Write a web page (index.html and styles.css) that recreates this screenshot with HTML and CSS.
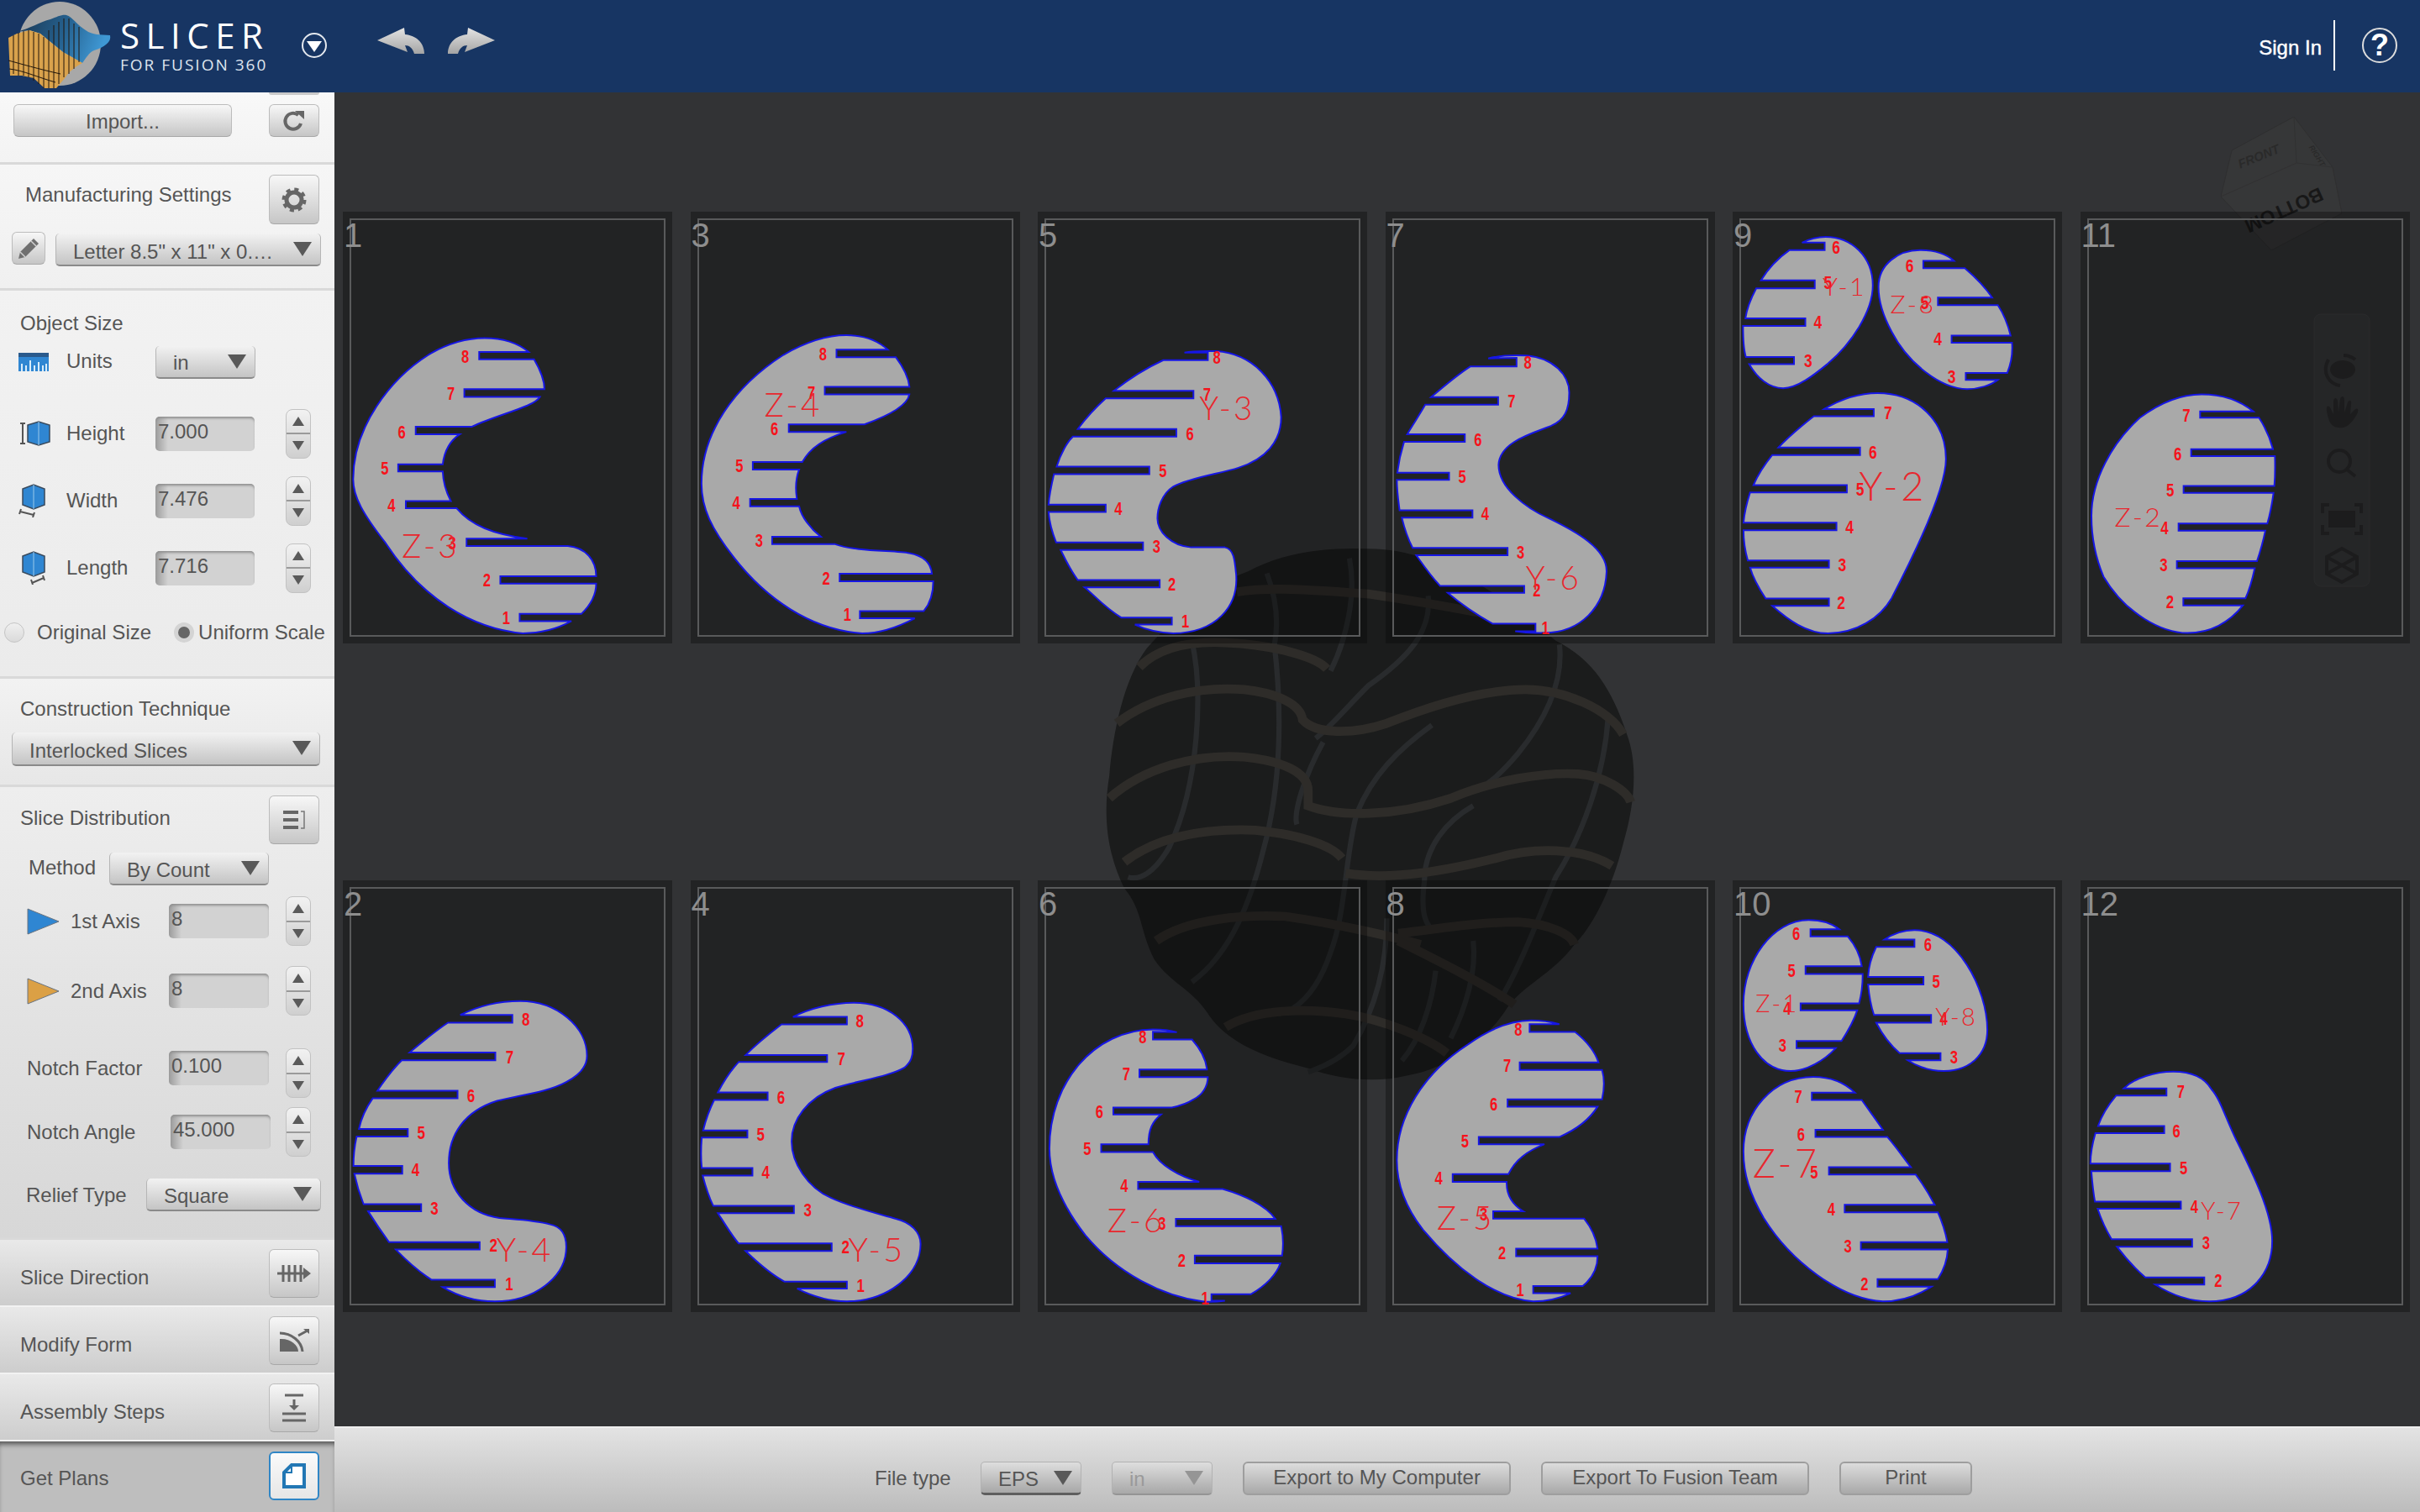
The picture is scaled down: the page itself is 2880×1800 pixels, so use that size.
FILE: index.html
```html
<!DOCTYPE html>
<html lang="en">
<head>
    <meta charset="UTF-8">
    <title>Slicer for Fusion 360</title>
    <link rel="stylesheet" href="styles.css">
</head>
<body>
<div class="app">
    <header class="topbar">
        <svg class="logo" viewBox="0 0 135 110">
            <defs>
                <linearGradient id="wave" x1="0" y1="0" x2="1" y2="0.2">
                    <stop offset="0" stop-color="#1c3650"/>
                    <stop offset="0.55" stop-color="#25618f"/>
                    <stop offset="1" stop-color="#3f98d4"/>
                </linearGradient>
            </defs>
            <ellipse cx="71" cy="52" rx="49" ry="50" fill="#a8a8a8"/>
            <path d="M20 38C35 34 48 26 60 23C68 20 74 17 79 18C86 20 92 30 102 36C110 42 120 41 131 42C133 50 124 56 112 60C106 62 102 70 98 75L75 62L48 40L35 36Z" fill="url(#wave)"/>
            <path d="M10 45L20 40L35 36L48 40L60 50L75 62L98 75C88 80 82 86 78 92L67 105L53 105L40 93L26 90L12 90Z" fill="#d9a24c"/>
            <path d="M16 42V88M22 39V90M28 37V90M34 36V92M40 38V96M46 40V100M52 44V105M58 48V105M64 54V105M70 58V100M76 62V92M82 66V88M88 70V82M58 36V48M64 30V54M70 26V58M76 22V62M82 22V66M88 28V70M94 32V74" fill="none" stroke="#20150a" stroke-width="1"/>
            <path d="M10 72C25 76 45 82 72 88M11 82C28 84 45 92 66 98" fill="none" stroke="#20150a" stroke-width="1"/>
        </svg>
        <div class="brand">
            <div class="brand-name">SLICER</div>
            <div class="brand-sub">FOR FUSION 360</div>
        </div>
        <svg class="menu-toggle" viewBox="0 0 30 30">
            <circle cx="15" cy="15" r="14" fill="none" stroke="#e4e8ee" stroke-width="2"/>
            <path d="M6 10H24L15 23Z" fill="#fff"/>
        </svg>
        <svg class="history-arrow" viewBox="0 0 56 32">
            <defs>
                <linearGradient id="silver" x1="0" y1="0" x2="0" y2="1">
                    <stop offset="0" stop-color="#e4e4e4"/>
                    <stop offset="1" stop-color="#a4a4a4"/>
                </linearGradient>
            </defs>
            <path d="M0 15L32 0L33 8C46 9 56 18 56 31L44 31C42 24 38 21 33 21L36 29Z" fill="url(#silver)"/>
        </svg>
        <svg class="history-arrow redo" viewBox="0 0 56 32">
            <path d="M56 15L24 0L23 8C10 9 0 18 0 31L12 31C14 24 18 21 23 21L20 29Z" fill="url(#silver)"/>
        </svg>
        <div class="user-area">
            <span class="sign-in">Sign In</span>
            <span class="user-divider"></span>
            <span class="help-icon">?</span>
        </div>
    </header>

    <div class="main">
        <aside class="sidebar">
            <section class="panel panel-import">
                <div class="stub"></div>
                <div class="import-row">
                    <div class="btn btn-import">Import...</div>
                    <div class="btn btn-small">
                        <svg class="icon" width="28" height="26" viewBox="0 0 28 26">
                            <path d="M22 16A9.5 9.5 0 1 1 19 6" fill="none" stroke="#666" stroke-width="4"/>
                            <path d="M15 1H26V11Z" fill="#666"/>
                        </svg>
                    </div>
                </div>
            </section>

            <section class="panel panel-mfg">
                <div class="mfg-head">
                    <span class="mfg-title">Manufacturing Settings</span>
                    <div class="btn btn-gear">
                        <svg width="30" height="30" viewBox="0 0 30 30">
                            <circle cx="15" cy="15" r="9" fill="none" stroke="#666" stroke-width="5"/>
                            <circle cx="15" cy="15" r="12.5" fill="none" stroke="#666" stroke-width="4" stroke-dasharray="5 4.8"/>
                        </svg>
                    </div>
                </div>
                <div class="mfg-sheet">
                    <div class="btn btn-pencil">
                        <svg width="30" height="30" viewBox="0 0 30 30">
                            <path d="M21 3L27 9L11 25L3 27L5 19Z" fill="#707070"/>
                            <path d="M18 6L24 12M5 19L11 25" stroke="#cfcfcf" stroke-width="1.5"/>
                        </svg>
                    </div>
                    <div class="select select-sheet">Letter 8.5" x 11" x 0.…</div>
                </div>
            </section>

            <section class="panel panel-size">
                <div class="panel-title">Object Size</div>
                <div class="size-row units-row">
                    <svg width="36" height="22" viewBox="0 0 36 22">
                        <rect width="36" height="22" fill="#2f86d2"/>
                        <rect width="36" height="5" fill="#2a5a8c"/>
                        <path d="M4 22V13M9 22V15M14 22V9M19 22V15M24 22V11M29 22V15M33 22V13" stroke="#d8ecfa" stroke-width="2"/>
                    </svg>
                    <span class="label units-label">Units</span>
                    <div class="select select-units">in</div>
                </div>
                <div class="size-row">
                    <svg width="38" height="30" viewBox="0 0 38 30">
                        <path d="M2 3H8M5 3V27M2 27H8" stroke="#555" stroke-width="2" fill="none"/>
                        <path d="M11 5L24 1L37 5V25L24 29L11 25Z" fill="#2f86d2" stroke="#3a4a5c" stroke-width="1.5"/>
                        <path d="M24 1V29" stroke="#9bc8ea"/>
                    </svg>
                    <span class="label">Height</span>
                    <div class="field">7.000</div>
                    <div class="spin"><span class="spin-up"></span><span class="spin-down"></span></div>
                </div>
                <div class="size-row">
                    <svg width="38" height="40" viewBox="0 0 38 40">
                        <path d="M5 6L18 1L31 6V25L18 30L5 25Z" fill="#2f86d2" stroke="#3a4a5c" stroke-width="1.5"/>
                        <path d="M18 1V30" stroke="#9bc8ea"/>
                        <path d="M2 33L18 37M3 30L1 36M19 34L17 40" stroke="#555" stroke-width="2" fill="none"/>
                    </svg>
                    <span class="label">Width</span>
                    <div class="field">7.476</div>
                    <div class="spin"><span class="spin-up"></span><span class="spin-down"></span></div>
                </div>
                <div class="size-row">
                    <svg width="38" height="40" viewBox="0 0 38 40">
                        <path d="M5 6L18 1L31 6V25L18 30L5 25Z" fill="#2f86d2" stroke="#3a4a5c" stroke-width="1.5"/>
                        <path d="M18 1V30" stroke="#9bc8ea"/>
                        <path d="M16 38L30 32M15 34L17 40M29 29L31 35" stroke="#555" stroke-width="2" fill="none"/>
                    </svg>
                    <span class="label">Length</span>
                    <div class="field">7.716</div>
                    <div class="spin"><span class="spin-up"></span><span class="spin-down"></span></div>
                </div>
                <div class="radio-row">
                    <span class="radio"></span>
                    <span class="radio-label">Original Size</span>
                    <span class="radio radio-on"></span>
                    <span class="radio-label radio-label-tight">Uniform Scale</span>
                </div>
            </section>

            <section class="panel panel-technique">
                <div class="panel-title">Construction Technique</div>
                <div class="select select-technique">Interlocked Slices</div>
            </section>

            <section class="panel panel-slices">
                <div class="slices-head">
                    <span class="slices-title">Slice Distribution</span>
                    <div class="btn btn-tool">
                        <svg width="28" height="26" viewBox="0 0 28 26">
                            <path d="M1 4H19M1 13H19M1 22H19" stroke="#666" stroke-width="4"/>
                            <path d="M22 3H26V23H22" fill="none" stroke="#777" stroke-width="1.5"/>
                        </svg>
                    </div>
                </div>
                <div class="method-row">
                    <span class="method-label">Method</span>
                    <div class="select select-method">By Count</div>
                </div>
                <div class="slice-row first-axis">
                    <svg class="axis-icon" width="38" height="32" viewBox="0 0 38 32">
                        <path d="M1 1L38 16L1 31Z" fill="#2f86d2" stroke="#6a7480"/>
                    </svg>
                    <span class="label">1st Axis</span>
                    <div class="field">8</div>
                    <div class="spin"><span class="spin-up"></span><span class="spin-down"></span></div>
                </div>
                <div class="slice-row second-axis">
                    <svg class="axis-icon" width="38" height="32" viewBox="0 0 38 32">
                        <path d="M1 1L38 16L1 31Z" fill="#dba045" stroke="#6a7480"/>
                    </svg>
                    <span class="label">2nd Axis</span>
                    <div class="field">8</div>
                    <div class="spin"><span class="spin-up"></span><span class="spin-down"></span></div>
                </div>
                <div class="slice-row notch-factor">
                    <span class="label label-wide">Notch Factor</span>
                    <div class="field">0.100</div>
                    <div class="spin"><span class="spin-up"></span><span class="spin-down"></span></div>
                </div>
                <div class="slice-row notch-angle">
                    <span class="label label-wide">Notch Angle</span>
                    <div class="field">45.000</div>
                    <div class="spin"><span class="spin-up"></span><span class="spin-down"></span></div>
                </div>
                <div class="relief-row">
                    <span class="relief-label">Relief Type</span>
                    <div class="select select-relief">Square</div>
                </div>
            </section>

            <section class="accordion">
                <span class="accordion-title">Slice Direction</span>
                <div class="btn btn-tool">
                    <svg width="42" height="26" viewBox="0 0 42 26">
                        <path d="M1 13H34" stroke="#666" stroke-width="3"/>
                        <path d="M8 3V23M15 3V23M22 3V23M29 3V23" stroke="#666" stroke-width="3"/>
                        <path d="M32 6L41 13L32 20Z" fill="#666"/>
                    </svg>
                </div>
            </section>
            <section class="accordion">
                <span class="accordion-title">Modify Form</span>
                <div class="btn btn-tool">
                    <svg width="38" height="30" viewBox="0 0 38 30">
                        <path d="M2 13V28H24C24 20 14 12 2 13Z" fill="#666"/>
                        <path d="M2 6C16 6 28 16 29 28" fill="none" stroke="#666" stroke-width="3"/>
                        <path d="M24 9L35 3" stroke="#666" stroke-width="3"/>
                        <path d="M30 1H37V7Z" fill="#666"/>
                    </svg>
                </div>
            </section>
            <section class="accordion">
                <span class="accordion-title">Assembly Steps</span>
                <div class="btn btn-tool">
                    <svg width="30" height="34" viewBox="0 0 30 34">
                        <path d="M4 2H26M1 24H29M1 32H29" stroke="#666" stroke-width="3"/>
                        <path d="M15 7V15" stroke="#666" stroke-width="3"/>
                        <path d="M9 14H21L15 20Z" fill="#666"/>
                    </svg>
                </div>
            </section>
            <section class="accordion accordion-active">
                <span class="accordion-title">Get Plans</span>
                <div class="btn btn-tool btn-selected">
                    <svg width="30" height="32" viewBox="0 0 30 32">
                        <path d="M3 12L12 3H27V29H3Z" fill="#fff" stroke="#2277b4" stroke-width="4"/>
                        <path d="M12 3V12H3" fill="none" stroke="#2277b4" stroke-width="2"/>
                    </svg>
                </div>
            </section>
        </aside>

        <div class="workspace">
            <div class="canvas">
                <svg class="model" viewBox="0 0 1568 1568">
                    <path class="model-body" d="M460 135C560 80 680 70 800 75C950 80 1120 180 1280 320C1380 370 1430 450 1470 570C1500 650 1490 760 1460 860C1430 980 1380 1080 1330 1130C1270 1210 1190 1240 1150 1300C1100 1380 1000 1460 880 1480C800 1500 700 1490 620 1460C500 1430 400 1390 350 1310C310 1250 250 1230 210 1170C170 1090 180 1040 130 980C90 900 70 800 90 680C100 560 130 420 190 340C280 240 360 170 460 135Z"/>
                    <g class="model-ribs">
                        <path d="M310 320C340 450 330 700 250 870C210 940 170 960 140 950"/>
                        <path d="M530 330C550 500 550 700 500 880C470 1000 420 1150 310 1230"/>
                        <path d="M660 590C610 680 580 780 590 810"/>
                        <path d="M950 545C860 610 790 680 750 780C720 880 720 1050 680 1150C650 1240 610 1280 580 1300"/>
                        <path d="M1060 760C990 800 930 870 930 960C920 1040 930 1070 950 1090"/>
                        <path d="M1290 330C1300 420 1260 520 1180 620C1130 680 1100 700 1070 720"/>
                        <path d="M1420 520C1410 680 1350 840 1280 950C1230 1070 1180 1200 1130 1280"/>
                        <path d="M940 200C950 300 880 370 780 440C720 500 680 550 640 580"/>
                        <path d="M1060 1120C1070 1200 1040 1300 1000 1380"/>
                        <path d="M960 1200C950 1290 920 1380 870 1440"/>
                        <path d="M830 1060C830 1180 800 1300 740 1400C700 1440 650 1460 620 1470"/>
                        <path d="M730 100C750 200 720 320 680 400"/>
                        <path d="M510 140C540 220 540 280 530 330"/>
                    </g>
                    <g class="model-bands">
                        <path d="M110 540C200 470 330 440 450 450C540 460 600 490 605 530C640 570 740 570 830 540C930 500 1080 450 1200 450C1300 450 1420 500 1460 570"/>
                        <path d="M90 740C180 660 320 620 450 630C550 640 620 670 620 720L620 760C700 790 850 790 1000 740C1120 690 1250 670 1340 675C1410 680 1470 720 1480 750"/>
                        <path d="M130 910C220 840 350 820 480 825C580 835 680 860 710 900"/>
                        <path d="M720 940C850 960 1000 930 1120 900C1220 870 1350 870 1430 920"/>
                        <path d="M215 1120C300 1060 450 1050 560 1055C700 1075 850 1110 920 1130"/>
                        <path d="M860 1100C960 1090 1060 1070 1180 1070C1260 1075 1320 1100 1330 1130"/>
                        <path d="M860 1120C960 1170 1100 1240 1170 1290"/>
                        <path d="M400 1350C480 1300 620 1300 720 1315C820 1330 940 1380 990 1420"/>
                        <path d="M170 390C220 340 300 320 400 325C520 330 640 360 670 395"/>
                        <path d="M430 190C520 175 640 185 780 195C880 210 1000 230 1100 250"/>
                    </g>
                </svg>

                <svg class="view-cube" viewBox="0 0 144 159">
                    <path d="M0 95L13 40L87 0L133 60L144 115L60 159Z" fill="#363738" stroke="#2f2f30"/>
                    <path d="M0 95L90 55L133 60M90 55L87 0" fill="none" stroke="#313132"/>
                    <text class="cube-front" x="47" y="52" transform="rotate(-22 47 52)">FRONT</text>
                    <text class="cube-right" x="112" y="48" transform="rotate(58 112 48)">RIGHT</text>
                    <text class="cube-bottom" x="72" y="104" transform="rotate(156 72 104)">BOTTOM</text>
                </svg>

                <svg class="nav-bar" viewBox="0 0 68 326">
                    <rect class="nav-back" x="1" y="1" width="66" height="324" rx="8"/>
                    <g class="nav-lines">
                        <ellipse class="nav-solid" cx="35" cy="67" rx="13" ry="9"/>
                        <path d="M18 55C10 70 18 84 32 86M50 55C46 52 42 50 36 50"/>
                        <circle cx="31" cy="176" r="13"/>
                        <path d="M40 186L50 194"/>
                        <path d="M19 228H11V238M49 228H57V238M19 262H11V252M49 262H57V252"/>
                        <path d="M34 280L52 290V310L34 320L16 310V290Z"/>
                        <path d="M16 290L52 310M52 290L16 310"/>
                    </g>
                    <path class="nav-solid" d="M18 125C14 112 16 108 20 112L24 120L24 104C25 100 28 100 29 104L30 118L32 102C33 98 37 98 37 103L37 118L41 106C43 102 46 104 45 108L44 120L50 114C54 112 54 116 52 120C46 130 40 138 30 136C24 136 20 132 18 125Z"/>
                    <rect class="nav-solid" x="18" y="235" width="32" height="20"/>
                </svg>

                <div class="sheets">
                    <article class="sheet">
                        <div class="sheet-frame"></div>
                        <span class="sheet-number">1</span>
                        <svg class="sheet-art" viewBox="15 35 732 1492" preserveAspectRatio="none">
                            <path class="piece" d="M428 520L318 520L318 545L440 545C455 585 463 615 463 648L285 648L285 675L453 675C440 710 360 735 302 778L177 778L177 804L275 804C250 830 240 870 237 908L138 908L138 933L237 933C238 975 245 1005 255 1035L155 1035L155 1060L268 1060C300 1120 350 1150 425 1165L290 1165L290 1190L515 1190C555 1195 578 1240 578 1295L365 1295L365 1320L578 1320C578 1360 565 1395 545 1425L408 1425L408 1450L523 1450C490 1478 450 1492 415 1492C300 1475 190 1370 110 1180C60 1080 38 1020 38 960C38 780 120 610 210 525C250 490 290 472 330 472C370 472 405 490 428 520Z"/>
                            <text class="num" x="287" y="533">8</text>
                            <text class="num" x="255" y="662">7</text>
                            <text class="num" x="146" y="795">6</text>
                            <text class="num" x="108" y="920">5</text>
                            <text class="num" x="123" y="1047">4</text>
                            <text class="num" x="258" y="1178">3</text>
                            <text class="num" x="335" y="1307">2</text>
                            <text class="num" x="378" y="1437">1</text>
                            <text class="tag" x="210" y="1230">Z-3</text>
                        </svg>
                    </article>
                    <article class="sheet">
                        <div class="sheet-frame"></div>
                        <span class="sheet-number">2</span>
                        <svg class="sheet-art" viewBox="15 23 715 1492" preserveAspectRatio="none">
                            <path class="piece" d="M270 488L383 488L383 515L243 515C210 550 185 585 160 618L346 618L346 645L143 645C120 680 105 715 90 750L264 750L264 776L80 776C65 810 55 845 50 882L156 882L156 908L45 908C40 945 38 975 38 1010L144 1010L144 1037L40 1037C45 1075 52 1110 60 1142L185 1142L185 1167L70 1167C85 1205 100 1240 115 1273L312 1273L312 1299L130 1299C155 1340 180 1375 207 1403L345 1403L345 1429L232 1429C265 1460 305 1478 345 1478C430 1478 500 1395 500 1290C500 1250 490 1220 465 1212C430 1197 390 1195 355 1190C290 1175 245 1100 245 1000C245 900 280 820 350 785C400 765 460 755 500 720C530 695 545 665 545 630C545 530 480 440 400 440C350 440 305 460 270 488Z"/>
                            <text class="num" x="412" y="503">8</text>
                            <text class="num" x="377" y="632">7</text>
                            <text class="num" x="293" y="767">6</text>
                            <text class="num" x="185" y="895">5</text>
                            <text class="num" x="172" y="1023">4</text>
                            <text class="num" x="214" y="1155">3</text>
                            <text class="num" x="342" y="1283">2</text>
                            <text class="num" x="376" y="1416">1</text>
                            <text class="tag" x="410" y="1340">Y-4</text>
                        </svg>
                    </article>
                    <article class="sheet">
                        <div class="sheet-frame"></div>
                        <span class="sheet-number">3</span>
                        <svg class="sheet-art" viewBox="784 35 732 1492" preserveAspectRatio="none">
                            <path class="piece" d="M1222 512L1108 512L1108 538L1240 538C1258 575 1268 610 1270 640L1082 640L1082 666L1270 666C1265 710 1215 745 1170 770L1002 770L1002 796L1130 796C1080 820 1050 850 1032 900L922 900L922 926L1025 926C1018 955 1016 990 1020 1028L916 1028L916 1053L1025 1053C1030 1090 1050 1130 1073 1158L965 1158L965 1184L1105 1184C1150 1210 1240 1205 1270 1215C1305 1225 1318 1255 1320 1286L1115 1286L1115 1312L1323 1312C1323 1350 1318 1385 1302 1415L1160 1415L1160 1440L1282 1440C1245 1470 1205 1492 1165 1492C1050 1480 950 1370 880 1230C830 1130 808 1060 808 975C808 800 880 640 990 530C1040 485 1085 462 1130 462C1170 462 1200 480 1222 512Z"/>
                            <text class="num" x="1078" y="525">8</text>
                            <text class="num" x="1052" y="660">7</text>
                            <text class="num" x="970" y="785">6</text>
                            <text class="num" x="892" y="912">5</text>
                            <text class="num" x="885" y="1040">4</text>
                            <text class="num" x="936" y="1170">3</text>
                            <text class="num" x="1085" y="1300">2</text>
                            <text class="num" x="1132" y="1425">1</text>
                            <text class="tag" x="1012" y="742">Z-4</text>
                        </svg>
                    </article>
                    <article class="sheet">
                        <div class="sheet-frame"></div>
                        <span class="sheet-number">4</span>
                        <svg class="sheet-art" viewBox="766 23 715 1492" preserveAspectRatio="none">
                            <path class="piece" d="M988 495L1105 495L1105 521L963 521C935 555 905 595 885 627L1062 627L1062 651L870 651C850 685 835 725 825 756L933 756L933 782L817 782C805 820 798 855 793 887L889 887L889 912L790 912C788 950 788 985 790 1017L900 1017L900 1043L792 1043C798 1080 805 1115 815 1148L990 1148L990 1173L825 1173C840 1210 855 1250 870 1278L1072 1278L1072 1304L885 1304C915 1350 940 1385 970 1410L1105 1410L1105 1434L997 1434C1030 1460 1065 1478 1105 1478C1190 1478 1265 1390 1265 1280C1265 1240 1245 1205 1210 1192C1160 1170 1110 1150 1070 1120C1020 1085 985 1000 985 925C985 850 1020 775 1080 740C1130 715 1200 700 1230 670C1245 650 1248 630 1248 605C1248 515 1195 446 1120 446C1075 446 1025 465 988 495Z"/>
                            <text class="num" x="1133" y="508">8</text>
                            <text class="num" x="1093" y="638">7</text>
                            <text class="num" x="962" y="772">6</text>
                            <text class="num" x="918" y="900">5</text>
                            <text class="num" x="928" y="1030">4</text>
                            <text class="num" x="1020" y="1160">3</text>
                            <text class="num" x="1102" y="1290">2</text>
                            <text class="num" x="1135" y="1422">1</text>
                            <text class="tag" x="1170" y="1340">Y-5</text>
                        </svg>
                    </article>
                    <article class="sheet">
                        <div class="sheet-frame"></div>
                        <span class="sheet-number">5</span>
                        <svg class="sheet-art" viewBox="24 35 732 1492" preserveAspectRatio="none">
                            <path class="piece" d="M420 517C500 525 560 620 565 745C565 830 530 890 470 920C430 940 360 955 325 985C300 1010 290 1060 290 1095C290 1140 320 1190 365 1195L440 1195C460 1200 462 1240 465 1290C470 1400 420 1490 325 1492C295 1490 265 1480 240 1462L322 1462L322 1438L210 1438C170 1400 150 1360 128 1333L295 1333L295 1308L113 1308C95 1270 85 1235 75 1204L258 1204L258 1178L65 1178C55 1140 50 1110 48 1073L175 1073L175 1047L48 1047C50 1010 55 975 60 942L272 942L272 916L66 916C75 870 90 830 102 812L332 812L332 786L113 786C130 750 150 715 175 680L370 680L370 654L193 654C225 615 265 575 303 548L402 548L402 522L350 522C365 517 385 516 420 517Z"/>
                            <text class="num" x="422" y="537">8</text>
                            <text class="num" x="400" y="665">7</text>
                            <text class="num" x="362" y="800">6</text>
                            <text class="num" x="302" y="930">5</text>
                            <text class="num" x="203" y="1060">4</text>
                            <text class="num" x="288" y="1190">3</text>
                            <text class="num" x="322" y="1322">2</text>
                            <text class="num" x="352" y="1450">1</text>
                            <text class="tag" x="445" y="755">Y-3</text>
                        </svg>
                    </article>
                    <article class="sheet">
                        <div class="sheet-frame"></div>
                        <span class="sheet-number">6</span>
                        <svg class="sheet-art" viewBox="24 23 732 1492" preserveAspectRatio="none">
                            <path class="piece" d="M333 548L280 546L280 573L367 573C385 605 398 640 400 677L250 677L250 703L402 703C402 735 390 765 370 780C355 795 340 802 322 808L192 808L192 832L298 832C280 855 270 880 270 935L165 935L165 962L280 962C295 1005 335 1045 383 1065L247 1065L247 1090L435 1090C480 1110 530 1145 552 1193L331 1193L331 1218L565 1218C570 1255 570 1290 567 1320L373 1320L373 1347L563 1347C555 1385 530 1425 498 1453L410 1453L410 1476L440 1476C420 1480 400 1480 390 1478C300 1460 200 1380 130 1250C80 1150 50 1050 50 950C50 720 150 540 280 538C300 538 320 542 333 548Z"/>
                            <text class="num" x="257" y="563">8</text>
                            <text class="num" x="221" y="690">7</text>
                            <text class="num" x="161" y="822">6</text>
                            <text class="num" x="134" y="948">5</text>
                            <text class="num" x="216" y="1078">4</text>
                            <text class="num" x="300" y="1208">3</text>
                            <text class="num" x="344" y="1335">2</text>
                            <text class="num" x="396" y="1465">1</text>
                            <text class="tag" x="243" y="1240">Z-6</text>
                        </svg>
                    </article>
                    <article class="sheet">
                        <div class="sheet-frame"></div>
                        <span class="sheet-number">7</span>
                        <svg class="sheet-art" viewBox="797 35 732 1492" preserveAspectRatio="none">
                            <path class="piece" d="M1110 532C1170 540 1205 600 1205 660C1205 720 1195 755 1165 775C1125 800 1050 830 1048 910C1048 990 1110 1060 1160 1095C1220 1140 1290 1200 1288 1280C1285 1400 1230 1490 1150 1490C1130 1492 1105 1490 1085 1485L1130 1485L1130 1459L1035 1459C990 1420 960 1385 935 1352L1105 1352L1105 1328L918 1328C895 1290 880 1255 865 1222L1068 1222L1068 1197L857 1197C845 1160 838 1125 833 1092L990 1092L990 1067L828 1067C825 1030 822 1000 822 962L938 962L938 937L823 937C826 900 832 860 838 830L973 830L973 804L845 804C860 765 875 730 885 702L1047 702L1047 676L898 676C925 640 955 600 985 570L1088 570L1088 540L1025 542C1050 532 1085 530 1110 532Z"/>
                            <text class="num" x="1113" y="555">8</text>
                            <text class="num" x="1077" y="687">7</text>
                            <text class="num" x="1002" y="822">6</text>
                            <text class="num" x="967" y="950">5</text>
                            <text class="num" x="1018" y="1078">4</text>
                            <text class="num" x="1097" y="1210">3</text>
                            <text class="num" x="1133" y="1342">2</text>
                            <text class="num" x="1152" y="1472">1</text>
                            <text class="tag" x="1170" y="1340">Y-6</text>
                        </svg>
                    </article>
                    <article class="sheet">
                        <div class="sheet-frame"></div>
                        <span class="sheet-number">8</span>
                        <svg class="sheet-art" viewBox="797 23 732 1492" preserveAspectRatio="none">
                            <path class="piece" d="M1183 520L1117 520L1117 547L1218 547C1245 580 1262 615 1270 652L1095 652L1095 678L1278 678C1285 715 1283 745 1278 780L1068 780L1068 805L1268 805C1250 850 1220 885 1183 910L1004 910L1004 935L1150 935C1110 960 1085 990 1070 1038L946 1038L946 1065L1066 1065C1065 1110 1080 1145 1103 1167L1036 1167L1036 1192L1238 1192C1255 1225 1265 1260 1268 1296L1087 1296L1087 1322L1268 1322C1268 1365 1255 1400 1235 1425L1125 1425L1125 1450L1208 1450C1180 1470 1150 1478 1125 1478C1040 1470 950 1360 880 1230C840 1150 822 1070 822 990C822 840 880 690 980 590C1030 535 1080 507 1120 507C1145 507 1165 512 1183 520Z"/>
                            <text class="num" x="1092" y="537">8</text>
                            <text class="num" x="1067" y="663">7</text>
                            <text class="num" x="1037" y="795">6</text>
                            <text class="num" x="973" y="922">5</text>
                            <text class="num" x="915" y="1050">4</text>
                            <text class="num" x="1015" y="1175">3</text>
                            <text class="num" x="1056" y="1310">2</text>
                            <text class="num" x="1096" y="1437">1</text>
                            <text class="tag" x="975" y="1232">Z-5</text>
                        </svg>
                    </article>
                    <article class="sheet">
                        <div class="sheet-frame"></div>
                        <span class="sheet-number">9</span>
                        <svg class="sheet-art" viewBox="788 35 698 1492" preserveAspectRatio="none">
                            <path class="piece" d="M935 142L983 142L983 168L908 168C880 200 860 240 848 272L962 272L962 300L838 300C825 340 818 370 815 404L942 404L942 430L810 430C810 470 810 505 816 537L918 537L918 562L823 562C840 610 865 645 895 645C925 645 960 600 990 560C1040 490 1085 380 1085 290C1085 190 1040 122 985 122C968 122 950 130 935 142Z"/>
                            <path class="piece" d="M1257 205L1192 205L1192 230L1280 230C1305 265 1325 300 1338 332L1223 332L1223 358L1350 358C1365 395 1372 430 1377 463L1252 463L1252 488L1380 488C1382 530 1378 560 1370 592L1282 592L1282 616L1350 616C1335 635 1310 648 1285 648C1230 648 1160 560 1125 450C1105 390 1097 340 1097 295C1097 215 1140 168 1185 168C1215 168 1240 180 1257 205Z"/>
                            <path class="piece" d="M982 717L1087 717L1087 742L960 742C930 780 905 815 885 850L1058 850L1058 876L872 876C855 910 840 950 832 980L1030 980L1030 1005L825 1005C818 1040 813 1075 811 1110L1008 1110L1008 1136L811 1136C811 1170 814 1205 820 1240L992 1240L992 1265L825 1265C832 1305 845 1340 858 1372L992 1372L992 1397L872 1397C905 1445 945 1492 990 1492C1050 1492 1100 1440 1125 1370C1160 1260 1240 1000 1240 890C1240 760 1180 662 1095 662C1050 662 1010 690 982 717Z"/>
                            <text class="num" x="1007" y="158">6</text>
                            <text class="num" x="990" y="280">5</text>
                            <text class="num" x="968" y="417">4</text>
                            <text class="num" x="948" y="548">3</text>
                            <text class="tag tag-s" x="1025" y="325">Y-1</text>
                            <text class="num" x="1163" y="220">6</text>
                            <text class="num" x="1195" y="350">5</text>
                            <text class="num" x="1222" y="475">4</text>
                            <text class="num" x="1252" y="605">3</text>
                            <text class="tag tag-s" x="1170" y="385">Z-8</text>
                            <text class="num" x="1117" y="730">7</text>
                            <text class="num" x="1085" y="865">6</text>
                            <text class="num" x="1058" y="993">5</text>
                            <text class="num" x="1035" y="1125">4</text>
                            <text class="num" x="1020" y="1255">3</text>
                            <text class="num" x="1018" y="1385">2</text>
                            <text class="tag tag-l" x="1128" y="1035">Y-2</text>
                        </svg>
                    </article>
                    <article class="sheet">
                        <div class="sheet-frame"></div>
                        <span class="sheet-number">10</span>
                        <svg class="sheet-art" viewBox="41 23 732 1492" preserveAspectRatio="none">
                            <path class="piece" d="M278 192L214 192L214 217L297 217C315 250 325 285 328 320L203 320L203 347L330 347C330 385 327 420 322 448L192 448L192 472L318 472C310 510 297 545 283 578L183 578L183 603L270 603C245 645 205 682 170 682C110 682 65 590 65 450C65 300 130 160 210 160C240 160 262 172 278 192Z"/>
                            <path class="piece" d="M378 228L445 228L445 253L360 253C350 285 343 320 342 357L465 357L465 383L342 383C344 420 348 455 355 488L482 488L482 515L360 515C375 560 393 595 412 620L503 620L503 645L430 645C455 670 485 682 510 682C565 682 607 630 607 540C607 400 540 195 445 195C420 195 395 210 378 228Z"/>
                            <path class="piece" d="M313 757L217 757L217 782L328 782C345 820 362 855 375 885L225 885L225 910L385 910C405 945 422 985 437 1014L255 1014L255 1040L448 1040C465 1075 480 1115 490 1144L290 1144L290 1170L497 1170C507 1205 514 1240 518 1273L326 1273L326 1299L519 1299C518 1335 510 1370 497 1401L363 1401L363 1427L483 1427C450 1460 415 1478 375 1478C280 1470 170 1340 110 1190C80 1110 65 1040 65 960C65 820 130 702 220 702C260 702 292 725 313 757Z"/>
                            <text class="num" x="182" y="207">6</text>
                            <text class="num" x="172" y="333">5</text>
                            <text class="num" x="162" y="465">4</text>
                            <text class="num" x="152" y="592">3</text>
                            <text class="tag tag-s" x="140" y="480">Z-1</text>
                            <text class="num" x="475" y="243">6</text>
                            <text class="num" x="493" y="372">5</text>
                            <text class="num" x="510" y="500">4</text>
                            <text class="num" x="533" y="632">3</text>
                            <text class="tag tag-s" x="538" y="525">Y-8</text>
                            <text class="num" x="187" y="770">7</text>
                            <text class="num" x="193" y="900">6</text>
                            <text class="num" x="222" y="1030">5</text>
                            <text class="num" x="260" y="1158">4</text>
                            <text class="num" x="297" y="1285">3</text>
                            <text class="num" x="334" y="1415">2</text>
                            <text class="tag tag-l" x="160" y="1050">Z-7</text>
                        </svg>
                    </article>
                    <article class="sheet sheet-eleven">
                        <div class="sheet-frame"></div>
                        <span class="sheet-number">11</span>
                        <svg class="sheet-art" viewBox="108 507 1176 1033" preserveAspectRatio="none">
                            <path class="piece" d="M725 985L535 985L535 1000L745 1000C770 1025 785 1050 795 1075L503 1075L503 1092L802 1092C803 1115 803 1140 800 1163L476 1163L476 1180L797 1180C792 1205 785 1230 775 1253L458 1253L458 1270L768 1270C760 1295 750 1320 738 1343L452 1343L452 1360L730 1360C722 1385 712 1410 697 1432L475 1432L475 1449L688 1449C640 1490 570 1515 490 1515C400 1515 270 1470 190 1380C165 1340 147 1290 147 1235C147 1150 220 1060 320 1000C400 960 470 944 540 944C620 944 680 960 725 985Z"/>
                            <text class="num" x="486" y="993">7</text>
                            <text class="num" x="455" y="1085">6</text>
                            <text class="num" x="428" y="1172">5</text>
                            <text class="num" x="408" y="1262">4</text>
                            <text class="num" x="405" y="1352">3</text>
                            <text class="num" x="427" y="1440">2</text>
                            <text class="tag" x="315" y="1260">Z-2</text>
                        </svg>
                    </article>
                    <article class="sheet">
                        <div class="sheet-frame"></div>
                        <span class="sheet-number">12</span>
                        <svg class="sheet-art" viewBox="814 23 732 1492" preserveAspectRatio="none">
                            <path class="piece" d="M910 742L1005 742L1005 767L893 767C875 800 860 840 853 872L1000 872L1000 897L847 897C840 935 836 970 836 1002L1013 1002L1013 1028L838 1028C840 1065 842 1100 846 1133L1037 1133L1037 1158L852 1158C860 1195 870 1230 883 1263L1062 1263L1062 1289L895 1289C915 1330 935 1365 958 1395L1089 1395L1089 1420L980 1420C1015 1455 1055 1478 1100 1478C1185 1478 1240 1390 1240 1270C1240 1170 1195 1030 1160 920C1135 840 1125 780 1105 745C1090 705 1060 684 1020 684C980 684 935 705 910 742Z"/>
                            <text class="num" x="1037" y="752">7</text>
                            <text class="num" x="1027" y="888">6</text>
                            <text class="num" x="1043" y="1015">5</text>
                            <text class="num" x="1067" y="1148">4</text>
                            <text class="num" x="1093" y="1275">3</text>
                            <text class="num" x="1120" y="1405">2</text>
                            <text class="tag tag-s" x="1128" y="1195">Y-7</text>
                        </svg>
                    </article>
                </div>
            </div>

            <footer class="export-bar">
                <span class="export-label">File type</span>
                <div class="select export-select select-strong">EPS</div>
                <div class="select export-select select-off">in</div>
                <div class="btn export-btn">Export to My Computer</div>
                <div class="btn export-btn">Export To Fusion Team</div>
                <div class="btn export-btn export-print">Print</div>
            </footer>
        </div>
    </div>
</div>
</body>
</html>
```

FILE: styles.css
```css
* {
    box-sizing: border-box;
}

body {
    margin: 0;
    font-family: "Liberation Sans", Arial, sans-serif;
    font-size: 24px;
    color: #555;
    background-color: #323335;
}

.app {
    width: 2880px;
    height: 1800px;
    overflow: hidden;
}

/* top bar */
.topbar {
    height: 110px;
    display: flex;
    align-items: flex-start;
    background-color: #173563;
}

.logo {
    width: 135px;
    height: 110px;
    flex: none;
}

.brand {
    margin-left: 8px;
    width: 176px;
    padding-top: 24px;
    font-family: "Open Sans", sans-serif;
    color: #fff;
    white-space: nowrap;
}

.brand-name {
    font-size: 42px;
    font-weight: 500;
    line-height: 36px;
    letter-spacing: 7.5px;
}

.brand-sub {
    margin-top: 7px;
    font-size: 19px;
    line-height: 20px;
    letter-spacing: 2px;
    color: #dfe5ee;
}

.menu-toggle {
    width: 30px;
    height: 30px;
    margin: 39px 0 0 40px;
}

.history-arrow {
    width: 56px;
    height: 32px;
    margin: 33px 0 0 60px;
}

.history-arrow.redo {
    margin-left: 28px;
}

.user-area {
    margin-left: auto;
    padding: 24px 27px 0 0;
    display: flex;
    align-items: center;
    height: 84px;
    color: #fff;
}

.sign-in {
    margin-top: 6px;
    -webkit-text-stroke: 0.4px #fff;
}

.user-divider {
    width: 2px;
    height: 60px;
    margin-left: 14px;
    background-color: #fff;
}

.help-icon {
    width: 42px;
    height: 42px;
    margin-left: 32px;
    border: 2px solid #dcdcdc;
    border-radius: 50%;
    font-size: 36px;
    font-weight: bold;
    line-height: 38px;
    text-align: center;
}

.main {
    display: flex;
    height: 1690px;
}

/* left column */
.sidebar {
    width: 398px;
    flex: none;
    background-color: #eee;
}

.panel {
    border-bottom: 3px solid #d9d9d9;
}

.panel-title {
    line-height: 28px;
    padding-left: 24px;
}

.btn {
    display: flex;
    align-items: center;
    justify-content: center;
    border: 1px solid #bcbcbc;
    border-bottom-color: #a8a8a8;
    border-radius: 6px;
    background: linear-gradient(#f7f7f7, #c6c6c6);
    white-space: nowrap;
}

.select {
    position: relative;
    display: flex;
    align-items: center;
    height: 39px;
    padding-left: 20px;
    padding-top: 4px;
    border-radius: 5px;
    border-bottom: 2px solid #8a8a8a;
    border-right: 1px solid #b5b5b5;
    border-left: 1px solid #b5b5b5;
    background: linear-gradient(#f2f2f2, #c4c4c4);
    white-space: nowrap;
}

.select::after {
    content: "";
    position: absolute;
    right: 10px;
    top: 10px;
    border-left: 11px solid transparent;
    border-right: 11px solid transparent;
    border-top: 17px solid #595959;
}

.field {
    height: 41px;
    padding-left: 3px;
    line-height: 36px;
    border-radius: 5px;
    background: linear-gradient(90deg, #9c9c9c, #d2d2d2 15px);
    box-shadow: inset 0 3px 3px -1px #8f8f8f;
}

.spin {
    width: 30px;
    height: 59px;
    justify-self: end;
    display: flex;
    flex-direction: column;
    border: 1px solid #c2c2c2;
    border-radius: 8px;
    background: linear-gradient(#f2f2f2, #cfcfcf);
}

.spin-up,
.spin-down {
    flex: 1;
    display: flex;
    align-items: center;
    justify-content: center;
}

.spin-up {
    border-bottom: 2px solid #9a9a9a;
}

.spin-up::after {
    content: "";
    border-left: 7px solid transparent;
    border-right: 7px solid transparent;
    border-bottom: 11px solid #5a5a5a;
}

.spin-down::after {
    content: "";
    border-left: 7px solid transparent;
    border-right: 7px solid transparent;
    border-top: 11px solid #5a5a5a;
}

/* import */
.panel-import {
    height: 86px;
    background: linear-gradient(#f8f8f8, #f3f3f3);
}

.stub {
    width: 60px;
    height: 3px;
    margin-left: 320px;
    background-color: #c9c9c9;
    border-radius: 0 0 4px 4px;
}

.import-row {
    display: flex;
    justify-content: space-between;
    margin-top: 11px;
    padding: 0 18px 0 16px;
}

.btn-import {
    width: 260px;
    height: 39px;
    padding-top: 2px;
}

.btn-small {
    width: 60px;
    height: 39px;
}

/* manufacturing */
.panel-mfg {
    height: 150px;
    padding-top: 12px;
    background: linear-gradient(#f6f6f6, #f0f0f0);
}

.mfg-head {
    display: flex;
    justify-content: space-between;
    padding: 0 18px 0 30px;
}

.mfg-title {
    margin-top: 10px;
    line-height: 28px;
}

.btn-gear {
    width: 60px;
    height: 59px;
}

.mfg-sheet {
    display: flex;
    align-items: flex-start;
    margin-top: 9px;
    padding-left: 14px;
}

.btn-pencil {
    width: 40px;
    height: 39px;
}

.select-sheet {
    width: 316px;
    margin: 2px 0 0 12px;
    padding-top: 6px;
}

/* object size */
.panel-size {
    height: 462px;
    padding-top: 25px;
    background: linear-gradient(#f2f2f2, #ebebeb);
}

.size-row {
    display: grid;
    grid-template-columns: 57px 106px 118px 67px;
    align-items: center;
    height: 80px;
    padding-left: 22px;
}

.units-row {
    height: 40px;
    margin: 12px 0 25px;
}

.units-label {
    margin-top: -3px;
}

.select-units {
    width: 119px;
}

.radio-row {
    display: flex;
    align-items: center;
    height: 40px;
    margin-top: 17px;
    padding-left: 5px;
}

.radio {
    width: 24px;
    height: 24px;
    flex: none;
    border-radius: 50%;
    border: 1px solid #c4c4c4;
    background: linear-gradient(#f0f0f0, #dadada);
}

.radio-on {
    margin-left: 27px;
    border-width: 5px;
    border-color: #d4d4d4;
    background: #666;
}

.radio-label {
    margin-left: 15px;
    white-space: nowrap;
}

.radio-label-tight {
    margin-left: 5px;
}

/* construction */
.panel-technique {
    height: 129px;
    padding-top: 22px;
    background: linear-gradient(#f2f2f2, #e7e7e7);
}

.select-technique {
    width: 367px;
    height: 40px;
    margin: 14px 0 0 14px;
    padding-top: 6px;
}

/* slices */
.panel-slices {
    height: 539px;
    padding-top: 10px;
    background: linear-gradient(#eeeeee, #d7d7d7);
}

.slices-head {
    display: flex;
    justify-content: space-between;
    padding: 0 18px 0 24px;
}

.slices-title {
    margin-top: 13px;
    line-height: 28px;
}

.btn-tool {
    width: 60px;
    height: 58px;
    flex: none;
}

.method-row {
    display: flex;
    align-items: center;
    height: 39px;
    margin-top: 10px;
    padding-left: 34px;
}

.method-label {
    width: 96px;
    margin-top: -3px;
}

.select-method {
    width: 190px;
}

.slice-row {
    display: grid;
    grid-template-columns: 52px 117px 119px 50px;
    align-items: center;
    height: 59px;
    padding-left: 32px;
}

.label {
    white-space: nowrap;
}

.label-wide {
    grid-column: 1 / 3;
}

.first-axis {
    margin-top: 13px;
}

.second-axis {
    margin-top: 24px;
}

.notch-factor {
    margin-top: 27px;
}

.notch-factor .spin {
    margin-top: 12px;
}

.notch-angle {
    margin-top: 23px;
    grid-template-columns: 52px 117px 119px 48px;
    padding-left: 34px;
}

.notch-angle .label {
    margin-left: -2px;
}

.relief-row {
    display: flex;
    align-items: center;
    margin-top: 26px;
    padding-left: 31px;
}

.relief-label {
    width: 143px;
}

.select-relief {
    width: 208px;
}

/* collapsed steps */
.accordion {
    display: flex;
    justify-content: space-between;
    align-items: flex-start;
    height: 80px;
    padding: 11px 18px 0 24px;
    border-bottom: 2px solid #f2f2f2;
    background: linear-gradient(#e9e9e9, #cdcdcd);
}

.accordion-title {
    margin-top: 20px;
    line-height: 28px;
}

.accordion-active {
    height: 84px;
    padding-top: 12px;
    border-bottom: 0;
    background: #bebebe;
    box-shadow: inset 0 6px 6px -3px #4e4e4e;
}

.accordion-active .accordion-title {
    margin-top: 18px;
}

.btn-selected {
    border: 2px solid #2f86c6;
    background: linear-gradient(#fafafa, #e6e6e6);
}

/* workspace */
.workspace {
    flex: 1;
    display: flex;
    flex-direction: column;
}

.canvas {
    position: relative;
    flex: 1;
    overflow: hidden;
    background-color: #323335;
}

.model {
    position: absolute;
    left: 882px;
    top: 510px;
    width: 700px;
    height: 700px;
}

.model-body {
    fill: #1b1c1c;
}

.model-ribs path {
    fill: none;
    stroke: #292b2d;
    stroke-width: 14;
}

.model-bands path {
    fill: none;
    stroke: #2e2c29;
    stroke-width: 24;
}

.view-cube {
    position: absolute;
    left: 2245px;
    top: 29px;
    width: 144px;
    height: 159px;
}

.cube-front,
.cube-right {
    font-size: 15px;
    font-weight: bold;
    font-style: italic;
    fill: #2a2a2a;
    text-anchor: middle;
}

.cube-right {
    font-size: 9px;
}

.cube-bottom {
    font-size: 23px;
    font-weight: bold;
    fill: #181818;
    text-anchor: middle;
}

.nav-bar {
    position: absolute;
    left: 2355px;
    top: 263px;
    width: 68px;
    height: 326px;
}

.nav-back {
    fill: #37383a;
    stroke: #3e3f41;
}

.nav-lines {
    fill: none;
    stroke: #29292a;
    stroke-width: 4;
}

.nav-solid {
    fill: #29292a;
}

.sheets {
    position: relative;
    display: grid;
    grid-template-rows: 514px 514px;
    grid-auto-flow: column;
    grid-auto-columns: 392px;
    row-gap: 282px;
    column-gap: 21.5px;
    padding: 142px 0 0 10px;
}

.sheet {
    position: relative;
    padding: 11px 0 0 1px;
    background-color: rgba(5, 6, 7, 0.35);
}

.sheet-frame {
    position: absolute;
    inset: 8px;
    border: 2px solid #595a5b;
}

.sheet-number {
    position: relative;
    display: block;
    font-size: 40px;
    line-height: 34px;
    color: #8e8e8e;
}

.sheet-art {
    position: absolute;
    left: 0;
    top: 0;
    width: 100%;
    height: 100%;
}

.piece {
    fill: #a9a9a9;
    stroke: #1616e4;
    stroke-width: 2px;
    vector-effect: non-scaling-stroke;
}

.num,
.tag {
    text-anchor: middle;
    transform-box: fill-box;
    transform-origin: center;
}

.num {
    font-size: 66px;
    font-weight: bold;
    fill: #f5131c;
    dominant-baseline: central;
    transform: scale(0.47, 1);
}

.tag {
    font-family: Lato, "Liberation Sans", sans-serif;
    font-size: 116px;
    font-weight: 300;
    letter-spacing: 0.08em;
    fill: #e8272e;
    transform: scale(0.62, 1);
}

.tag-s {
    font-size: 87px;
}

.tag-l {
    font-size: 135px;
}

.sheet-eleven .num {
    font-size: 46px;
    transform: scale(1.1, 1);
}

.sheet-eleven .tag {
    font-size: 64px;
    transform: scale(1.5, 1);
}

/* export strip */
.export-bar {
    height: 102px;
    display: flex;
    align-items: center;
    gap: 36px;
    padding: 39px 0 20px 643px;
    border-top: 2px solid #eee;
    background: linear-gradient(#e3e3e3, #bcbcbc);
}

.export-label {
    width: 90px;
    white-space: nowrap;
}

.export-select {
    width: 120px;
    height: 40px;
    padding-left: 20px;
    border: 1px solid #b2b2b2;
    border-bottom: 2px solid #949494;
    background: linear-gradient(#dedede, #a8a8a8);
}

.select-strong {
    border-bottom: 3px solid #5e5e5e;
}

.select-off {
    color: #9a9a9a;
}

.select-off::after {
    border-top-color: #959595;
}

.export-btn {
    width: 319px;
    height: 40px;
    padding-bottom: 2px;
    border: 2px solid #9e9e9e;
    background: linear-gradient(#dcdcdc, #a9a9a9);
}

.export-print {
    width: 158px;
}
```
